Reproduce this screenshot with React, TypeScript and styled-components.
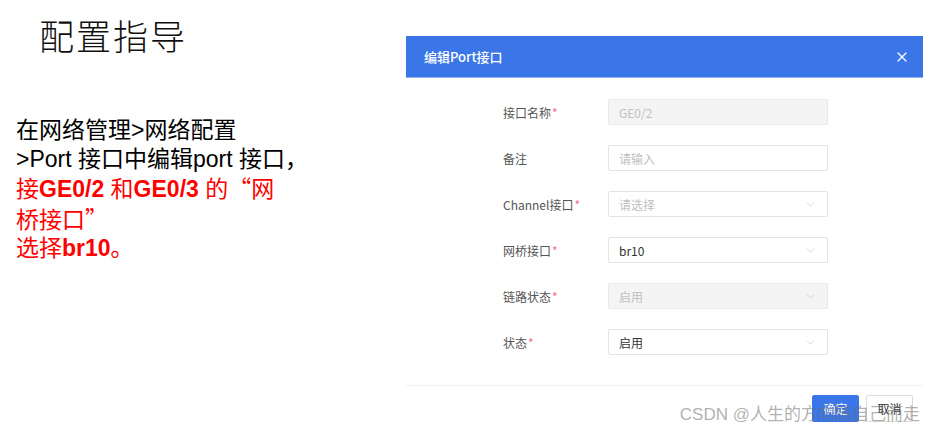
import React from "react";
import styled, { createGlobalStyle } from "styled-components";
import { ChevronDown, X } from "lucide-react";

const GlobalStyle = createGlobalStyle`
    html, body {
        margin: 0;
        padding: 0;
        background: #ffffff;
    }
    body {
        font-family: "Liberation Sans", "Noto Sans CJK SC", sans-serif;
    }
`

const Page = styled.div`
    position: relative;
    display: flex;
    width: 925px;
    height: 431px;
    overflow: hidden;
    background: #ffffff;
`

const Guide = styled.div`
    width: 406px;
    flex-shrink: 0;
    display: flex;
    flex-direction: column;
`

const Title = styled.h1`
    margin: 15px 0 0 39px;
    font-family: "Noto Sans CJK SC", sans-serif;
    font-weight: 300;
    font-size: 35px;
    line-height: 40px;
    letter-spacing: 2px;
    color: #111111;
`

const Steps = styled.div`
    margin: 61px 0 0 16px;
    font-family: "Liberation Sans", "Noto Sans CJK SC", sans-serif;
    font-size: 23px;
    line-height: 28.5px;
    color: #000000;
`

const Line = styled.div<{ $red?: boolean }>`
    white-space: nowrap;
    color: ${p => (p.$red ? "#ff0000" : "#000000")};
`

const B = styled.b`
    font-weight: 700;
`

const Quote = styled.span`
    font-family: "Noto Sans CJK SC", sans-serif;
`

const Modal = styled.div`
    margin-top: 36px;
    width: 517px;
    height: 395px;
    display: flex;
    flex-direction: column;
    background: #ffffff;
`

const Header = styled.div`
    height: 42px;
    display: flex;
    align-items: center;
    justify-content: space-between;
    padding: 0 13px 0 18px;
    background: #3a76e8;
    border-bottom: 1px solid #8fb2f2;
    box-sizing: border-box;
`

const HeaderTitle = styled.span`
    font-family: "Noto Sans CJK SC", sans-serif;
    font-size: 13px;
    font-weight: 500;
    color: #ffffff;
`

const Body = styled.div`
    flex: 1;
    display: flex;
    flex-direction: column;
    gap: 20px;
    padding: 21px 0 0 97px;
    border-bottom: 1px solid #f0f0f0;
`

const Row = styled.div`
    display: flex;
    align-items: center;
    height: 26px;
`

const Label = styled.label`
    width: 105px;
    font-family: "Noto Sans CJK SC", sans-serif;
    font-size: 12px;
    color: #555555;
`

const Star = styled.span`
    margin-left: 1px;
    color: #f56c8a;
`

const Field = styled.div<{ $disabled?: boolean }>`
    width: 220px;
    height: 26px;
    box-sizing: border-box;
    display: flex;
    align-items: center;
    justify-content: space-between;
    padding: 0 10px;
    border: 1px solid ${p => (p.$disabled ? "#eaeaea" : "#e4e4e4")};
    border-radius: 2px;
    background: ${p => (p.$disabled ? "#f4f4f4" : "#ffffff")};
`

const Value = styled.span<{ $muted?: boolean }>`
    font-family: "Noto Sans CJK SC", sans-serif;
    font-size: 12px;
    color: ${p => (p.$muted ? "#c0c0c0" : "#333333")};
`

const Footer = styled.div`
    height: 36px;
    display: flex;
    justify-content: flex-end;
    align-items: flex-start;
    gap: 7px;
    padding: 9px 10px 0 0;
`

const Button = styled.button<{ $primary?: boolean }>`
    width: 47px;
    height: 27px;
    padding: 0;
    border-radius: 2px;
    font-family: "Noto Sans CJK SC", sans-serif;
    font-size: 12px;
    border: 1px solid ${p => (p.$primary ? "#3a76e8" : "#dcdcdc")};
    background: ${p => (p.$primary ? "#3a76e8" : "#ffffff")};
    color: ${p => (p.$primary ? "#ffffff" : "#333333")};
`

// CSDN watermark stamped over the footer corner
const Watermark = styled.div`
    position: absolute;
    right: 5px;
    bottom: 6px;
    font-family: "Liberation Sans", "Noto Sans CJK SC", sans-serif;
    font-size: 17px;
    color: rgba(110, 110, 110, 0.55);
    pointer-events: none;
`

const rows = [
    { label: "接口名称", required: true, value: "GE0/2", muted: true, disabled: true, select: false },
    { label: "备注", required: false, value: "请输入", muted: true, disabled: false, select: false },
    { label: "Channel接口", required: true, value: "请选择", muted: true, disabled: false, select: true },
    { label: "网桥接口", required: true, value: "br10", muted: false, disabled: false, select: true },
    { label: "链路状态", required: true, value: "启用", muted: true, disabled: true, select: true },
    { label: "状态", required: true, value: "启用", muted: false, disabled: false, select: true },
]

const App = () => {
    return (
        <Page>
            <GlobalStyle />
            <Guide>
                <Title>配置指导</Title>
                <Steps>
                    <Line>在网络管理&gt;网络配置</Line>
                    <Line>&gt;Port 接口中编辑port 接口，</Line>
                    <Line $red>接<B>GE0/2</B> 和<B>GE0/3</B> 的<Quote>“</Quote>网</Line>
                    <Line $red>桥接口<Quote>”</Quote></Line>
                    <Line $red>选择<B>br10</B>。</Line>
                </Steps>
            </Guide>
            <Modal>
                <Header>
                    <HeaderTitle>编辑Port接口</HeaderTitle>
                    <X size={16} color="#ffffff" strokeWidth={1.8} />
                </Header>
                <Body>
                    {rows.map(r => (
                        <Row key={r.label}>
                            <Label>
                                {r.label}
                                {r.required && <Star>*</Star>}
                            </Label>
                            <Field $disabled={r.disabled}>
                                <Value $muted={r.muted}>{r.value}</Value>
                                {r.select && <ChevronDown size={13} color="#c4c4c4" strokeWidth={1.3} />}
                            </Field>
                        </Row>
                    ))}
                </Body>
                <Footer>
                    <Button $primary>确定</Button>
                    <Button>取消</Button>
                </Footer>
            </Modal>
            <Watermark>CSDN @人生的方向随自己而走</Watermark>
        </Page>
    );
};

export default App
